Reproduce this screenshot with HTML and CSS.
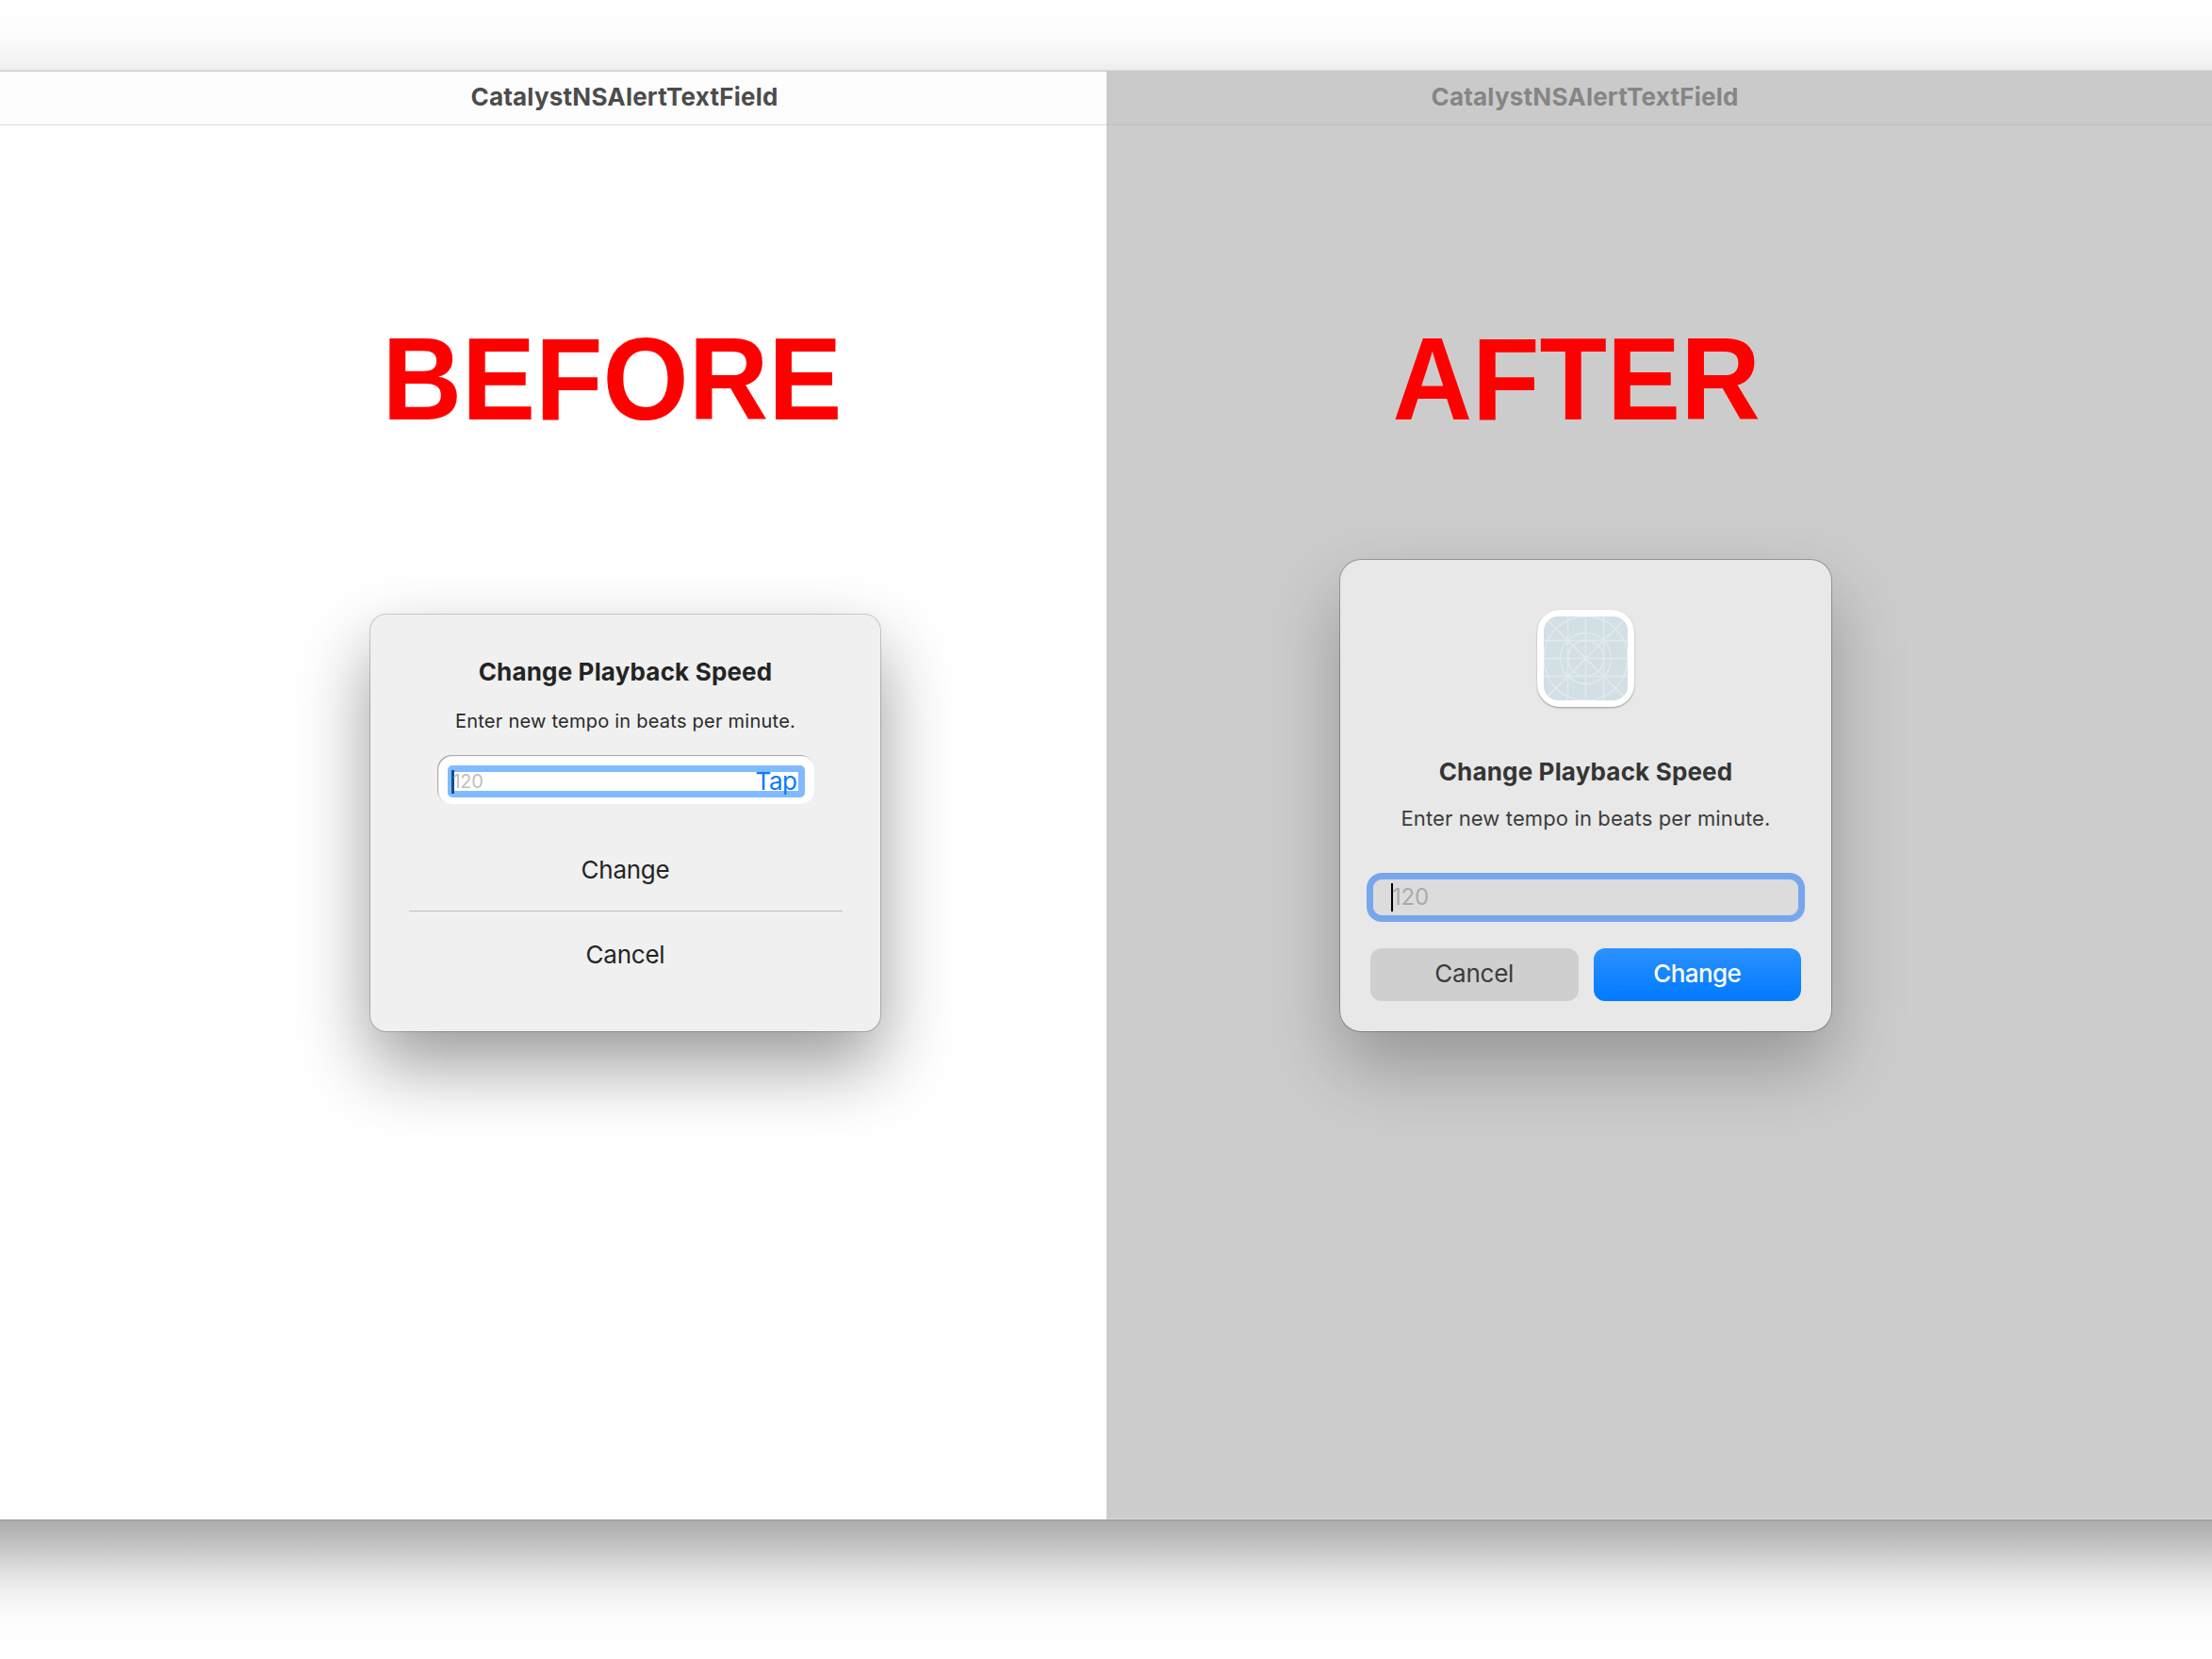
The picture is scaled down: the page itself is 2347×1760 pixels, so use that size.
FILE: index.html
```html
<!DOCTYPE html>
<html lang="en">
<head>
<meta charset="utf-8">
<title>CatalystNSAlertTextField</title>
<link rel="stylesheet" href="styles.css">
</head>
<body>
<main class="window">
  <section class="panel panel-before">
    <header class="titlebar"><h1 class="titlebar-text">CatalystNSAlertTextField</h1></header>
    <div class="stage">
      <h2 class="caption">BEFORE</h2>
      <div class="alert alert-before">
        <h3 class="alert-title">Change Playback Speed</h3>
        <p class="alert-message">Enter new tempo in beats per minute.</p>
        <div class="field">
          <div class="field-ring">
            <span class="caret"></span>
            <span class="placeholder">120</span>
            <span class="tap">Tap</span>
          </div>
        </div>
        <div class="actions">
          <div class="action">Change</div>
          <div class="action">Cancel</div>
        </div>
      </div>
    </div>
  </section>
  <section class="panel panel-after">
    <header class="titlebar"><h1 class="titlebar-text">CatalystNSAlertTextField</h1></header>
    <div class="stage">
      <h2 class="caption">AFTER</h2>
      <div class="alert alert-after">
        <div class="app-icon">
          <svg width="89" height="89" viewBox="-44.5 -44.5 89 89" fill="none" stroke="#e1e9eb" stroke-width="1.6">
            <path d="M-45 -19H45M-45 0H45M-45 19H45M-19 -45V45M0 -45V45M19 -45V45M-45 -45L45 45M-45 45L45 -45"/>
            <circle r="19"/>
            <circle r="27"/>
            <circle r="44.5"/>
          </svg>
        </div>
        <h3 class="alert-title">Change Playback Speed</h3>
        <p class="alert-message">Enter new tempo in beats per minute.</p>
        <div class="field">
          <span class="caret"></span>
          <span class="placeholder">120</span>
        </div>
        <div class="buttons">
          <div class="button">Cancel</div>
          <div class="button button-default">Change</div>
        </div>
      </div>
    </div>
  </section>
</main>
</body>
</html>
```
FILE: styles.css
```css
* {
  box-sizing: border-box;
}

/* The window spans the page, so its shadow falls off only above and below. */
body {
  margin: 0;
  height: 1760px;
  padding-top: 75px;
  overflow: hidden;
  background: linear-gradient(
    rgba(0, 0, 0, .001) 0, rgba(0, 0, 0, .003) 15px, rgba(0, 0, 0, .008) 30px,
    rgba(0, 0, 0, .018) 45px, rgba(0, 0, 0, .038) 60px, rgba(0, 0, 0, .071) 75px,
    rgba(0, 0, 0, .329) 1612px, rgba(0, 0, 0, .289) 1625px, rgba(0, 0, 0, .233) 1640px,
    rgba(0, 0, 0, .171) 1655px, rgba(0, 0, 0, .115) 1670px, rgba(0, 0, 0, .069) 1685px,
    rgba(0, 0, 0, .036) 1700px, rgba(0, 0, 0, .017) 1715px, rgba(0, 0, 0, .007) 1730px,
    rgba(0, 0, 0, .002) 1745px, rgba(0, 0, 0, 0) 1760px) #fff;
  font-family: Inter, "Liberation Sans", sans-serif;
}

h1, h2, h3, p {
  margin: 0;
}

.window {
  display: grid;
  grid-template-columns: 1174px 1173px;
  height: 1537px;
  box-shadow: 0 -1px rgba(0, 0, 0, .07), 0 1px rgba(0, 0, 0, .12);
}

.panel-before {
  background: #fff;
}

.panel-after {
  background: #ccc;
  box-shadow: inset 0 -1px #dedede;
}

.titlebar {
  height: 58px;
  padding-top: 12px;
  border-bottom: 1px solid #dedede;
}

.panel-before .titlebar {
  padding-left: 151px;
  background: #fdfdfd;
  box-shadow: inset 0 1px #cfcfcf;
}

.panel-after .titlebar {
  padding-right: 158px;
  background: #cacaca;
  border-color: #bebebe;
}

.titlebar-text {
  color: #4c4c4c;
  font-size: 26px;
  line-height: 32px;
  font-weight: 700;
  letter-spacing: .22px;
  text-align: center;
}

.panel-after .titlebar-text {
  color: #858585;
}

.stage {
  display: flex;
  flex-direction: column;
  align-items: center;
  padding-top: 207px;
}

.panel-before .stage {
  padding-left: 153px;
}

.panel-after .stage {
  padding-right: 156px;
}

.caption {
  margin-right: 28px;
  color: #f00;
  font-family: "Liberation Sans", sans-serif;
  font-size: 124px;
  line-height: 124px;
  font-weight: 700;
  transform: scaleX(.944);
}

.panel-after .caption {
  margin-right: 20px;
}

.alert {
  display: flex;
  flex-direction: column;
  align-items: center;
}

.alert-title {
  color: #242424;
  font-size: 26px;
  line-height: 32px;
  font-weight: 700;
  letter-spacing: .17px;
}

.alert-before {
  width: 541px;
  height: 442px;
  margin-top: 188px;
  padding-top: 45px;
  border-radius: 17px;
  background: #f0f0f0;
  box-shadow: 0 0 0 1px rgba(0, 0, 0, .18), 0 36px 78px rgba(0, 0, 0, .4);
}

.alert-before .alert-message {
  margin-top: 24px;
  color: #2a2a2a;
  font-size: 20px;
  line-height: 24px;
  letter-spacing: .24px;
}

.alert-before .field {
  width: 400px;
  height: 52px;
  margin-top: 24px;
  padding: 11px 10px 7px 11px;
  border-radius: 15px;
  background: #fff;
  box-shadow: inset 1px 1px 1px #a0a0a0;
}

.alert-before .field-ring {
  display: flex;
  align-items: center;
  height: 34px;
  border: 7px solid #80bbff;
  border-radius: 5px;
}

.alert-before .caret {
  width: 3px;
  height: 25px;
  margin-left: -3px;
  margin-right: -1px;
  background: #0b4f94;
}

.alert-before .placeholder {
  color: #bfbfbf;
  font-size: 20px;
  letter-spacing: -.3px;
}

.tap {
  margin-left: auto;
  margin-right: 1px;
  color: #0a7aff;
  font-size: 26px;
  line-height: 32px;
  letter-spacing: -.5px;
}

.actions {
  width: 460px;
  margin-top: 24px;
  border-top: 1px solid #eee;
}

.action {
  height: 88px;
  color: #242424;
  font-size: 26px;
  line-height: 90px;
  letter-spacing: -.25px;
  text-align: center;
}

.action + .action {
  border-top: 1px solid #bdbdbd;
  line-height: 91px;
}

.alert-after {
  width: 521px;
  height: 500px;
  margin-top: 130px;
  padding-top: 53px;
  border-radius: 22px;
  background: #e8e8e8;
  box-shadow: 0 0 0 1px rgba(0, 0, 0, .24), 0 36px 78px rgba(0, 0, 0, .27);
}

.app-icon {
  width: 103px;
  height: 103px;
  padding: 7px;
  border-radius: 24px;
  background: #fff;
  box-shadow: 0 1px 2px rgba(0, 0, 0, .35);
}

.app-icon svg {
  display: block;
  border-radius: 15px;
  background: #d2dfe5;
}

.alert-after .alert-title {
  margin-top: 53px;
  color: #353535;
}

.alert-after .alert-message {
  margin-top: 19px;
  color: #3c3c3c;
  font-size: 22px;
  line-height: 28px;
  letter-spacing: .12px;
}

.alert-after .field {
  display: flex;
  align-items: center;
  width: 465px;
  height: 52px;
  margin-top: 44px;
  padding-left: 19px;
  border: 7px solid #76a7ee;
  border-radius: 16px;
  background: #dcdcdc;
}

.alert-after .caret {
  width: 2px;
  height: 30px;
  margin-right: -1px;
  background: #000;
}

.alert-after .placeholder {
  color: #aaa;
  font-size: 24px;
  line-height: 28px;
  letter-spacing: -.2px;
}

.buttons {
  display: grid;
  grid-template-columns: 1fr 1fr;
  gap: 16px;
  width: 457px;
  margin-top: 28px;
}

.button {
  height: 56px;
  border-radius: 12px;
  background: #cfcfcf;
  color: #3b3b3b;
  font-size: 26px;
  line-height: 54px;
  letter-spacing: -.25px;
  text-align: center;
}

.button-default {
  background: linear-gradient(#2b91ff, #007aff);
  color: #fff;
  font-weight: 500;
  letter-spacing: -.6px;
}
```
